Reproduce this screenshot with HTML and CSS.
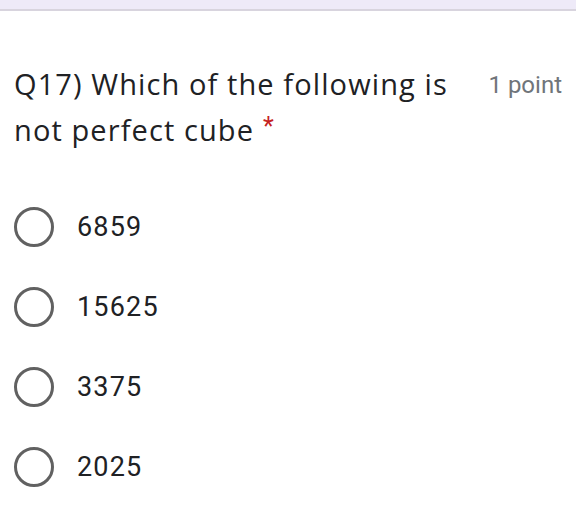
FILE: index.html
```html
<!DOCTYPE html>
<html>
<head>
<meta charset="utf-8">
<link rel="stylesheet" href="styles.css">
</head>
<body>
<div class="topbar"></div>
<div class="card">
  <div class="header">
    <div class="title">Q17) Which of the following is not perfect cube<span class="req">*</span></div>
    <div class="points">1 point</div>
  </div>
  <div class="options">
    <div class="option"><span class="radio"></span><span class="label">6859</span></div>
    <div class="option"><span class="radio"></span><span class="label">15625</span></div>
    <div class="option"><span class="radio"></span><span class="label">3375</span></div>
    <div class="option"><span class="radio"></span><span class="label">2025</span></div>
  </div>
</div>
</body>
</html>
```
FILE: styles.css
```css
html, body {
  margin: 0;
  padding: 0;
  background: #ffffff;
}
body {
  width: 576px;
  height: 527px;
  overflow: hidden;
  font-family: Roboto, "Noto Sans", sans-serif;
}
.topbar {
  height: 9px;
  background: #eeeaf8;
  border-bottom: 2px solid #d8d4de;
}
.card {
  padding: 0 14px 0 14px;
}
.header {
  display: flex;
  justify-content: space-between;
  align-items: flex-start;
  margin-top: 50px;
}
.title {
  width: 445px;
  font-family: "Open Sans", Roboto, sans-serif;
  font-size: 29px;
  letter-spacing: 1.1px;
  line-height: 46px;
  color: #202124;
}
.req {
  display: inline-block;
  margin-left: 9px;
  font-family: Roboto, sans-serif;
  font-size: 25px;
  line-height: 20px;
  letter-spacing: 0;
  vertical-align: 6px;
  color: #c5221f;
}
.points {
  font-size: 24px;
  color: #70757a;
  line-height: 26px;
  margin-top: 11px;
  white-space: nowrap;
}
.options {
  display: flex;
  flex-direction: column;
  margin-top: 34px;
}
.option {
  display: flex;
  align-items: center;
  height: 80px;
}
.radio {
  flex: none;
  width: 40px;
  height: 40px;
  border: 3px solid #616161;
  border-radius: 50%;
  box-sizing: border-box;
}
.label {
  margin-left: 23px;
  font-size: 27px;
  letter-spacing: 1.2px;
  color: #202124;
}
```
